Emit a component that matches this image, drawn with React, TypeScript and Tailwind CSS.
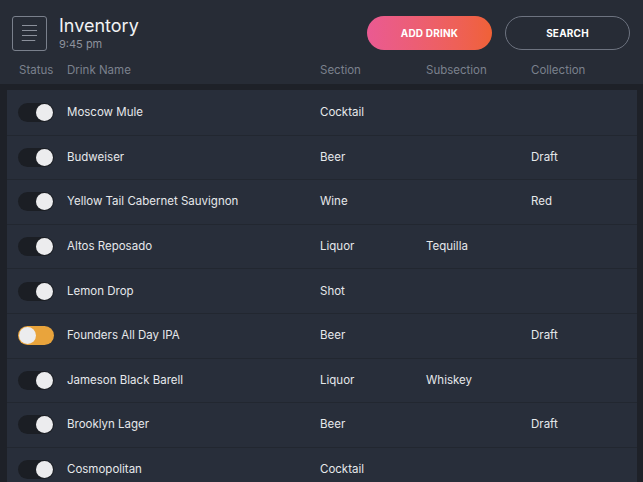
import { useState } from 'react';

type Drink = {
  id: number;
  active: boolean;
  name: string;
  section: string;
  subsection?: string;
  collection?: string;
};

const drinks: Drink[] = [
  { id: 1, active: true, name: 'Moscow Mule', section: 'Cocktail' },
  { id: 2, active: true, name: 'Budweiser', section: 'Beer', collection: 'Draft' },
  { id: 3, active: true, name: 'Yellow Tail Cabernet Sauvignon', section: 'Wine', collection: 'Red' },
  { id: 4, active: true, name: 'Altos Reposado', section: 'Liquor', subsection: 'Tequilla' },
  { id: 5, active: true, name: 'Lemon Drop', section: 'Shot' },
  { id: 6, active: false, name: 'Founders All Day IPA', section: 'Beer', collection: 'Draft' },
  { id: 7, active: true, name: 'Jameson Black Barell', section: 'Liquor', subsection: 'Whiskey' },
  { id: 8, active: true, name: 'Brooklyn Lager', section: 'Beer', collection: 'Draft' },
  { id: 9, active: true, name: 'Cosmopolitan', section: 'Cocktail' },
];

function Toggle({ on, onClick }: { on: boolean; onClick: () => void }) {
  return (
    <button
      onClick={onClick}
      className={`flex items-center w-[36px] h-[19px] rounded-full px-[1px] ${
        on ? 'bg-[#1b1e24] justify-end' : 'bg-[#e9a43c] justify-start'
      }`}
    >
      <span className="block w-[17px] h-[17px] rounded-full bg-[#ececee]" />
    </button>
  );
}

export default function App() {
  const [items, setItems] = useState(drinks);

  const toggle = (id: number) => {
    setItems((prev) => prev.map((d) => (d.id === id ? { ...d, active: !d.active } : d)));
  };

  return (
    <div
      className="w-[643px] h-[482px] overflow-hidden bg-[#1e2128] flex flex-col"
      style={{ fontFamily: 'Inter, "Noto Sans", sans-serif' }}
    >
      {/* Header */}
      <div className="bg-[#272c36] h-[84px] shrink-0 flex flex-col">
        <div className="flex items-center h-[66px] pl-[12px] pr-[13px]">
          <button className="w-[35px] h-[35px] border border-[#7a808c] rounded-[3px] flex flex-col items-center justify-center gap-[3.5px]">
            <span className="block w-[15px] h-[1.5px] bg-[#8b909b]" />
            <span className="block w-[15px] h-[1.5px] bg-[#8b909b]" />
            <span className="block w-[15px] h-[1.5px] bg-[#8b909b]" />
            <span className="block w-[15px] h-[1.5px] bg-[#8b909b] -translate-x-[1px] scale-x-90" />
          </button>
          <div className="ml-[12px] flex flex-col mt-[1px]">
            <span className="text-[18px] leading-[20px] text-[#f1f2f4]">Inventory</span>
            <span className="text-[11px] leading-[13px] mt-[2px] text-[#8d929c]">9:45 pm</span>
          </div>
          <div className="ml-auto flex items-center gap-[13px]">
            <button className="w-[125px] h-[34px] rounded-full bg-gradient-to-r from-[#ea5a92] to-[#f06136] text-white text-[10px] font-bold tracking-[0.2px]">
              ADD DRINK
            </button>
            <button className="w-[125px] h-[34px] rounded-full border border-[#6d7380] text-white text-[10px] font-bold tracking-[0.2px]">
              SEARCH
            </button>
          </div>
        </div>
        <div className="flex items-center h-[10px] text-[11.5px] text-[#7b818d]">
          <span className="w-[67px] pl-[19px]">Status</span>
          <span className="w-[253px]">Drink Name</span>
          <span className="w-[106px]">Section</span>
          <span className="w-[105px]">Subsection</span>
          <span>Collection</span>
        </div>
      </div>

      {/* Table */}
      <div className="flex-1 pt-[6px] pl-[7px] pr-[6px]">
        <div className="bg-[#282e3a] h-full pt-[1px]">
          {items.map((d) => (
            <div
              key={d.id}
              className="flex items-center h-[44.6px] border-b border-[#222730] text-[11.5px] text-[#e6e8eb]"
            >
              <div className="w-[60px] pl-[11px] flex items-center">
                <Toggle on={d.active} onClick={() => toggle(d.id)} />
              </div>
              <span className="w-[253px]">{d.name}</span>
              <span className="w-[106px]">{d.section}</span>
              <span className="w-[105px]">{d.subsection}</span>
              <span>{d.collection}</span>
            </div>
          ))}
        </div>
      </div>
    </div>
  );
}
